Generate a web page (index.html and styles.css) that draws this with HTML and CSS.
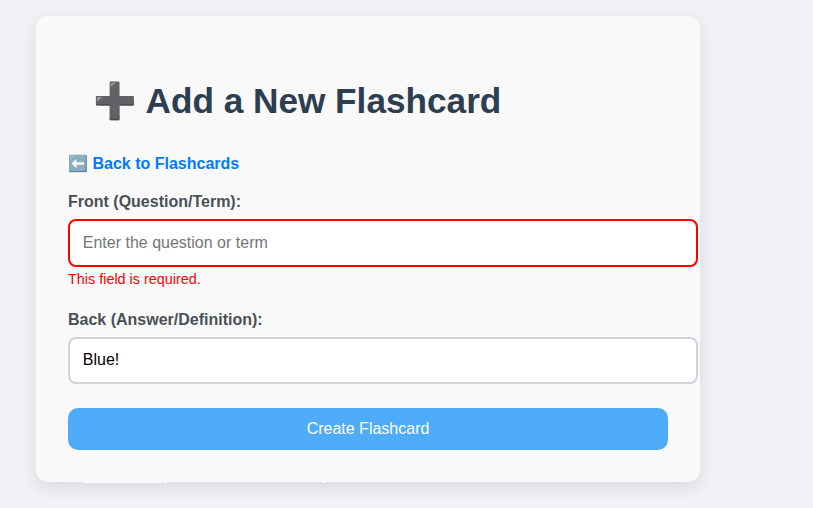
FILE: index.html
```html
<!DOCTYPE html>
<html lang="en">
<head>
<meta charset="utf-8">
<title>Add a New Flashcard</title>
<link rel="stylesheet" href="styles.css">
</head>
<body>
<main class="card">
  <h1 class="title">➕ Add a New Flashcard</h1>
  <a class="back" href="#">⬅️ Back to Flashcards</a>
  <form class="form">
    <label class="label" for="front">Front (Question/Term):</label>
    <input class="input invalid" id="front" type="text" placeholder="Enter the question or term">
    <p class="error">This field is required.</p>
    <label class="label" for="back">Back (Answer/Definition):</label>
    <input class="input" id="back" type="text" value="Blue!">
    <button class="submit" type="button">Create Flashcard</button>
  </form>
  <span class="edge edge-wide"></span>
  <span class="edge edge-dot"></span>
  <span class="edge edge-mid"></span>
</main>
</body>
</html>
```
FILE: styles.css
```css
* { box-sizing: border-box; }
body {
  margin: 0;
  padding: 16px 36px;
  background: #f0f2f6;
  font-family: "Liberation Sans", Arial, sans-serif;
  font-size: 16px;
  overflow: hidden;
}
.card {
  position: relative;
  width: 664px;
  height: 466px;
  padding: 64px 32px 32px;
  background: #f9f9f9;
  border-radius: 12px;
  box-shadow: 0 6px 18px rgba(0, 0, 0, 0.1);
}
.title {
  margin: 0 0 33px 25px;
  font-size: 35.2px;
  line-height: 42px;
  color: #2c3e50;
}
.back {
  display: block;
  height: 18px;
  line-height: 18px;
  color: #007bff;
  font-weight: bold;
  text-decoration: none;
}
.form { display: flex; flex-direction: column; margin-top: 20px; }
.label { height: 18px; line-height: 18px; font-weight: bold; color: #495057; }
.input {
  width: 630px;
  height: 47px;
  margin-top: 8px;
  padding: 0 12.8px 2px;
  border: 2px solid #ced4da;
  border-radius: 8px;
  background: #fff;
  font: inherit;
  color: #000;
}
.input::placeholder { color: #757575; }
.invalid { height: 48px; padding-bottom: 0; border-color: #f00; }
.error { margin: 4px 0 24px; font-size: 14.4px; line-height: 16px; color: #f00; }
.submit {
  height: 42px;
  margin-top: 24px;
  border: 0;
  border-radius: 10px;
  background: #4dabf7;
  color: #fff;
  font: inherit;
}
/* Light slivers just under the card's lower edge */
.edge {
  position: absolute;
  top: 100%;
  height: 1px;
  background: #f9f9f9;
}
.edge-wide { left: 46px; width: 80px; }
.edge-dot { left: 128px; width: 3px; }
.edge-mid { left: 286px; width: 3px; }
```
